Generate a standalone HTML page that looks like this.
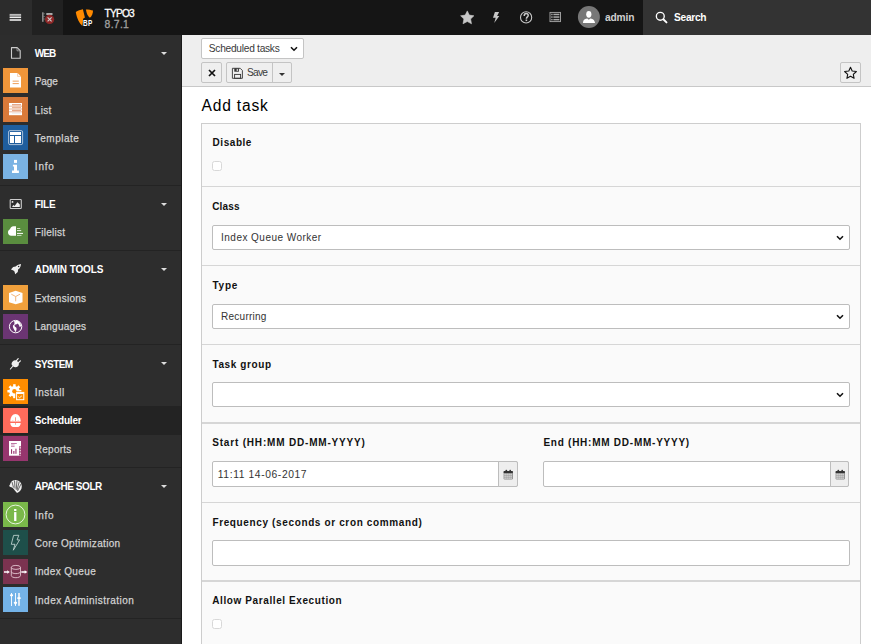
<!DOCTYPE html>
<html><head><meta charset="utf-8"><style>
*{margin:0;padding:0;box-sizing:border-box}
html,body{width:871px;height:644px;overflow:hidden;background:#fff;font-family:"Liberation Sans",sans-serif}
.t{position:absolute;line-height:1;white-space:nowrap}
.a{position:absolute}
svg{position:absolute;overflow:visible}
</style></head>
<body>
<div class="a" style="left:0;top:0;width:871px;height:35px;background:#151515"></div><div class="a" style="left:0;top:0;width:32px;height:35px;background:#2c2c2c"></div><div class="a" style="left:32px;top:0;width:31px;height:35px;background:#212121"></div><div class="a" style="left:643px;top:0;width:228px;height:35px;background:#333"></div><svg style="left:0;top:0" width="63" height="35" viewBox="0 0 63 35"><rect x="9.6" y="13.9" width="11.5" height="1.6" fill="#bbb"/><rect x="9.6" y="15.6" width="11.5" height="0.9" fill="#eee"/><rect x="9.6" y="17" width="11.5" height="1.1" fill="#eee"/><rect x="9.6" y="19.2" width="11.5" height="1.6" fill="#eee"/><rect x="42" y="12.3" width="1.6" height="9.5" fill="#888"/><rect x="43.4" y="13.4" width="1.3" height="0.8" fill="#888"/><rect x="43.4" y="16" width="1.3" height="0.8" fill="#888"/><rect x="43.4" y="18.6" width="1.3" height="0.8" fill="#888"/><rect x="46.3" y="13" width="6.2" height="2" fill="#aaa"/><circle cx="49.6" cy="19.4" r="4.6" fill="#8e2727"/><path d="M47.6 17.4 L51.6 21.4 M51.6 17.4 L47.6 21.4" stroke="#ccc" stroke-width="1.1"/></svg><svg style="left:0;top:0" width="110" height="35" viewBox="0 0 110 35"><path d="M75.8 12.1 C77.8 10.6 80.4 9.8 82.9 9.3 L84.9 17.4 L83.3 18.8 L82.3 25.9 C79.8 23.6 76.8 19 75.8 12.1 Z" fill="#ff8a00"/><path d="M85.9 9.4 C88.6 9.4 91.2 9.8 93 10.5 C93 13.5 91.8 16.3 89.9 17.7 C88 16.4 86.5 13.4 85.9 9.4 Z" fill="#ff8a00"/><rect x="83.2" y="18.8" width="10.3" height="8" fill="#151515"/></svg><div class="t" style="left:83.4px;top:18.67px;font-size:8.9px;color:#fff;font-weight:bold;letter-spacing:0.4px;transform:scaleX(0.72);transform-origin:0 0">BP</div>
<div class="t" style="left:104.6px;top:8.97px;font-size:10.2px;color:#fff;font-weight:normal;letter-spacing:-0.814px;-webkit-text-stroke:0.3px #fff">TYPO3</div>
<div class="t" style="left:104.6px;top:19.60px;font-size:10.4px;color:#a0a0a0;font-weight:normal;letter-spacing:0.29px;-webkit-text-stroke:0.3px #a0a0a0">8.7.1</div>
<svg style="left:0;top:0" width="871" height="35" viewBox="0 0 871 35"><path d="M467.3 10.9 L469.3 15.1 L473.9 15.8 L470.6 19 L471.5 23.8 L467.3 21.5 L463 23.8 L463.9 19 L460.6 15.8 L465.2 15.1 Z" fill="#c8c8c8" stroke="#c8c8c8" stroke-width="0.6" stroke-linejoin="round"/><path d="M494.9 12 L499.1 12 L497.1 15.9 L499.3 15.9 L494.2 22.9 L495.7 17.8 L493 17.8 Z" fill="#c8c8c8"/><circle cx="526.1" cy="17.4" r="5.6" fill="none" stroke="#c8c8c8" stroke-width="1.1"/><path d="M524.2 15.9 C524.2 14.3 525.1 13.6 526.2 13.6 C527.4 13.6 528.2 14.4 528.2 15.5 C528.2 16.9 526.4 17 526.4 18.7" fill="none" stroke="#c8c8c8" stroke-width="1.5"/><rect x="525.6" y="19.5" width="1.6" height="1.6" fill="#c8c8c8"/><rect x="550" y="12.4" width="10.5" height="9.2" fill="none" stroke="#aaa" stroke-width="0.9"/><rect x="551.2" y="13.7" width="1.4" height="1.5" fill="#aaa"/><rect x="553.4" y="13.7" width="6" height="1.5" fill="#aaa"/><rect x="551.2" y="16.3" width="1.4" height="1.5" fill="#aaa"/><rect x="553.4" y="16.3" width="6" height="1.5" fill="#aaa"/><rect x="551.2" y="18.9" width="1.4" height="1.5" fill="#aaa"/><rect x="553.4" y="18.9" width="6" height="1.5" fill="#aaa"/><circle cx="588.9" cy="16.95" r="11" fill="#777"/><ellipse cx="588.8" cy="14.3" rx="2.6" ry="3.4" fill="#fff"/><path d="M582.9 23.1 L583.3 21 C583.8 19.6 585.5 18.9 587.3 18.6 L588.8 19.8 L590.3 18.6 C592.1 18.9 593.9 19.6 594.4 21 L595.1 23.1 Z" fill="#fff"/><circle cx="660.3" cy="16.3" r="3.95" fill="none" stroke="#fff" stroke-width="1.35"/><path d="M663.3 19.3 L666.5 22.4" stroke="#fff" stroke-width="1.9" stroke-linecap="round"/></svg><div class="t" style="left:604.9px;top:12.77px;font-size:10.2px;color:#d0d0d0;font-weight:bold;letter-spacing:-0.11px;">admin</div>
<div class="t" style="left:674.1px;top:12.77px;font-size:10.2px;color:#fff;font-weight:bold;letter-spacing:-0.303px;">Search</div>
<div class="a" style="left:0;top:35px;width:182px;height:609px;background:#2d2d2d"></div><div class="a" style="left:181px;top:35px;width:1px;height:609px;background:#1a1a1a"></div><div class="t" style="left:34.8px;top:49.39px;font-size:10px;color:#fff;font-weight:bold;letter-spacing:-0.925px;">WEB</div>
<div class="a" style="left:161px;top:51.55px;width:0;height:0;border-left:3.5px solid transparent;border-right:3.5px solid transparent;border-top:3.5px solid #ddd"></div><svg style="left:0;top:0" width="182" height="644" viewBox="0 0 182 644"><path d="M11.5 47.6 L17.2 47.6 L20.2 50.6 L20.2 58.3 L11.5 58.3 Z" fill="none" stroke="#ccc" stroke-width="1.1" stroke-linejoin="round"/><path d="M17 48 L17 50.8 L19.8 50.8" fill="none" stroke="#aaa" stroke-width="0.8"/></svg><svg style="left:3px;top:68px" width="25" height="25" viewBox="0 0 25 25"><rect width="25" height="25" fill="#f0963a"/><path d="M7 5 L14.6 5 L18 8.4 L18 19.6 L7 19.6 Z" fill="#fff"/><path d="M14.6 5 L14.6 8.4 L18 8.4" fill="none" stroke="#f3b37a" stroke-width="0.6"/><rect x="9.6" y="12.6" width="6.2" height="1.1" fill="#f0a868"/><rect x="9.6" y="15" width="6.2" height="1.1" fill="#f0a868"/></svg><div class="t" style="left:34.8px;top:77.13px;font-size:10px;color:#d2d2d2;font-weight:normal;letter-spacing:-0.117px;-webkit-text-stroke:0.25px #d2d2d2">Page</div>
<svg style="left:3px;top:97px" width="25" height="25" viewBox="0 0 25 25"><rect width="25" height="25" fill="#d97a3a"/><rect x="6" y="6" width="13" height="12.2" fill="#fff"/><rect x="9" y="7" width="9" height="1.4" fill="#e6a889"/><rect x="9" y="9.9" width="9" height="1.3" fill="#eab496"/><rect x="9" y="12.8" width="9" height="1.3" fill="#e6a889"/><rect x="9" y="15.7" width="9" height="1.1" fill="#eee"/><rect x="6" y="8.8" width="13" height="0.6" fill="#d9875a"/><rect x="6" y="11.7" width="13" height="0.6" fill="#d9875a"/><rect x="6" y="14.6" width="13" height="0.6" fill="#d9875a"/></svg><div class="t" style="left:34.8px;top:105.80px;font-size:10px;color:#d2d2d2;font-weight:normal;letter-spacing:0.283px;-webkit-text-stroke:0.25px #d2d2d2">List</div>
<svg style="left:3px;top:125px" width="25" height="25" viewBox="0 0 25 25"><rect width="25" height="25" fill="#1f5e9e"/><rect x="5.6" y="5.6" width="14" height="14" rx="1.4" fill="none" stroke="#a8c0da" stroke-width="1"/><rect x="7" y="7" width="11" height="3" fill="#fff"/><rect x="7" y="11" width="4" height="7" fill="#fff"/><rect x="12" y="11" width="6" height="7" fill="#fff"/></svg><div class="t" style="left:34.8px;top:134.47px;font-size:10px;color:#d2d2d2;font-weight:normal;letter-spacing:0.5px;-webkit-text-stroke:0.25px #d2d2d2">Template</div>
<svg style="left:3px;top:154px" width="25" height="25" viewBox="0 0 25 25"><rect width="25" height="25" fill="#7ab3e3"/><rect x="11" y="5.9" width="3" height="3" fill="#fff"/><path d="M9.9 10.8 L14 10.8 L14 16.6 L15.9 16.6 L15.9 19 L9 19 L9 16.6 L11 16.6 L11 12.5 L9.9 12.5 Z" fill="#fff"/></svg><div class="t" style="left:34.8px;top:162.15px;font-size:10px;color:#d2d2d2;font-weight:normal;letter-spacing:0.8px;-webkit-text-stroke:0.25px #d2d2d2">Info</div>
<div class="a" style="left:0;top:185px;width:181px;height:1px;background:#232323"></div><div class="t" style="left:34.8px;top:199.76px;font-size:10px;color:#fff;font-weight:bold;letter-spacing:-0.283px;">FILE</div>
<div class="a" style="left:161px;top:202.93px;width:0;height:0;border-left:3.5px solid transparent;border-right:3.5px solid transparent;border-top:3.5px solid #ddd"></div><svg style="left:0;top:0" width="182" height="644" viewBox="0 0 182 644"><rect x="10.2" y="199.5" width="11.1" height="9" rx="0.8" fill="none" stroke="#ccc" stroke-width="1.1"/><circle cx="12.5" cy="201.9" r="0.95" fill="#eee"/><path d="M12 206.9 L13.3 204.9 L14.6 205.9 L17.4 202.2 L19.8 204.5 L19.8 206.9 Z" fill="#eee"/></svg><svg style="left:3px;top:219px" width="25" height="25" viewBox="0 0 25 25"><rect width="25" height="25" fill="#5a8d3f"/><path d="M13 7.2 L10.5 7.2 C8.5 7.2 7.3 8.6 7 10.3 C5.8 10.8 5 11.9 5 13.3 C5 15.3 6.3 16.7 8.2 16.7 L13 16.7 Z" fill="#fff"/><rect x="14" y="9" width="3.2" height="0.9" fill="#d6e5cf"/><rect x="14" y="11.1" width="4.2" height="1" fill="#e8f0e4"/><rect x="14" y="13.9" width="6" height="1" fill="#fff"/><rect x="14" y="15.9" width="4.5" height="0.9" fill="#d6e5cf"/></svg><div class="t" style="left:34.8px;top:227.52px;font-size:10px;color:#d2d2d2;font-weight:normal;letter-spacing:0.264px;-webkit-text-stroke:0.25px #d2d2d2">Filelist</div>
<div class="a" style="left:0;top:250px;width:181px;height:1px;background:#232323"></div><div class="t" style="left:34.8px;top:265.14px;font-size:10px;color:#fff;font-weight:bold;letter-spacing:-0.12px;">ADMIN TOOLS</div>
<div class="a" style="left:161px;top:268.30px;width:0;height:0;border-left:3.5px solid transparent;border-right:3.5px solid transparent;border-top:3.5px solid #ddd"></div><svg style="left:0;top:0" width="182" height="644" viewBox="0 0 182 644"><path d="M21.06 263.97 C19.6 264.1 18.3 264.5 17.2 265.2 L15.6 266.6 L13.1 266.9 L11 269.6 L13.4 270.4 L14.5 271.6 L15.2 274.2 L17.8 272 L18.1 269.6 L19.6 268.2 C20.4 267 20.9 265.6 21.06 263.97 Z" fill="#eee"/><circle cx="18.6" cy="266.4" r="0.75" fill="#2d2d2d"/></svg><svg style="left:3px;top:285px" width="25" height="25" viewBox="0 0 25 25"><rect width="25" height="25" fill="#f0a03c"/><path d="M12.7 5.8 L19.5 8 L19.5 17.3 L12.7 19.2 L6 17.3 L6 8 Z" fill="#fff"/><path d="M8.3 9.2 L12.7 11.5 L17 9.2 M12.7 11.5 L12.7 16.3" fill="none" stroke="#f2ae6a" stroke-width="0.9"/></svg><div class="t" style="left:34.8px;top:293.89px;font-size:10px;color:#d2d2d2;font-weight:normal;letter-spacing:0.256px;-webkit-text-stroke:0.25px #d2d2d2">Extensions</div>
<svg style="left:3px;top:314px" width="25" height="25" viewBox="0 0 25 25"><rect width="25" height="25" fill="#6b3573"/><circle cx="12.6" cy="12.6" r="6.2" fill="none" stroke="#fff" stroke-width="1"/><path d="M10.9 7.2 C12 9 11.6 10.5 10 11.5 C9.5 13 10.6 14.5 11.2 15.8 L12.6 18.2 C13.5 16 14 14.8 13.2 13.5 C12 12.5 11.2 12.7 11.6 10.8 C13 10.8 14 10.2 14.6 9.6 C15.8 10.5 16.5 12 16.6 13 L18.1 12.2 C18 9.6 16.5 7.6 14.5 6.7 Z" fill="#fff"/></svg><div class="t" style="left:34.8px;top:321.56px;font-size:10px;color:#d2d2d2;font-weight:normal;letter-spacing:0.213px;-webkit-text-stroke:0.25px #d2d2d2">Languages</div>
<div class="a" style="left:0;top:344px;width:181px;height:1px;background:#232323"></div><div class="t" style="left:34.8px;top:360.18px;font-size:10px;color:#fff;font-weight:bold;letter-spacing:-0.56px;">SYSTEM</div>
<div class="a" style="left:161px;top:362.34px;width:0;height:0;border-left:3.5px solid transparent;border-right:3.5px solid transparent;border-top:3.5px solid #ddd"></div><svg style="left:0;top:0" width="182" height="644" viewBox="0 0 182 644"><path d="M12.9 361.2 C14 360 16 360.2 17 361 L18.3 362.3 C19 363.3 19.2 365.3 18 366.3 C16.6 367.7 14.3 367.6 13 366.3 L12.3 365.6 C11 364.3 11.5 362.4 12.9 361.2 Z" fill="#eee"/><path d="M16 361.2 L18.2 358.7 M17.9 363.3 L20.4 360.9" stroke="#eee" stroke-width="1.2" stroke-linecap="round"/><path d="M13 366 L10.4 369" stroke="#eee" stroke-width="1.1" stroke-linecap="round"/></svg><svg style="left:3px;top:379px" width="25" height="25" viewBox="0 0 25 25"><rect width="25" height="25" fill="#ff8d00"/><circle cx="11.4" cy="12.2" r="5.2" fill="#fff"/><rect x="10.15" y="5.20" width="2.5" height="3" transform="rotate(0 11.4 12.2)" fill="#fff"/><rect x="10.15" y="5.20" width="2.5" height="3" transform="rotate(45 11.4 12.2)" fill="#fff"/><rect x="10.15" y="5.20" width="2.5" height="3" transform="rotate(90 11.4 12.2)" fill="#fff"/><rect x="10.15" y="5.20" width="2.5" height="3" transform="rotate(135 11.4 12.2)" fill="#fff"/><rect x="10.15" y="5.20" width="2.5" height="3" transform="rotate(180 11.4 12.2)" fill="#fff"/><rect x="10.15" y="5.20" width="2.5" height="3" transform="rotate(225 11.4 12.2)" fill="#fff"/><rect x="10.15" y="5.20" width="2.5" height="3" transform="rotate(270 11.4 12.2)" fill="#fff"/><rect x="10.15" y="5.20" width="2.5" height="3" transform="rotate(315 11.4 12.2)" fill="#fff"/><circle cx="11.4" cy="12.2" r="2.2" fill="#ff8d00"/><rect x="12.3" y="12.3" width="10" height="10" fill="#ff8d00"/><rect x="13.6" y="13.4" width="7.2" height="7.3" fill="none" stroke="#fff" stroke-width="1"/><rect x="13.6" y="13.4" width="7.2" height="1.6" fill="#fff"/><path d="M15.3 17.7 L16.6 18.7 L18.8 16.9" fill="none" stroke="#fff" stroke-width="0.9"/></svg><div class="t" style="left:34.8px;top:387.93px;font-size:10px;color:#d2d2d2;font-weight:normal;letter-spacing:0.567px;-webkit-text-stroke:0.25px #d2d2d2">Install</div>
<div class="a" style="left:0;top:406px;width:181px;height:29px;background:#232323"></div><svg style="left:3px;top:408px" width="25" height="25" viewBox="0 0 25 25"><rect width="25" height="25" fill="#ff6b5b"/><path d="M7.3 13.6 C7.3 8.8 9.6 5.9 12.5 5.9 C15.4 5.9 17.7 8.8 17.7 13.6 Z" fill="#fff"/><rect x="12.15" y="9.3" width="0.75" height="3.8" fill="#ff7a66"/><circle cx="9.9" cy="12.5" r="0.4" fill="#ff8a78"/><circle cx="15.1" cy="12.5" r="0.4" fill="#ff8a78"/><path d="M7.3 15.1 L17.7 15.1 C17.6 17.4 16.6 19.1 14.6 19.1 L10.4 19.1 C8.4 19.1 7.4 17.4 7.3 15.1 Z" fill="#fff"/><rect x="12.15" y="15.1" width="0.75" height="1.6" fill="#ff7a66"/></svg><div class="t" style="left:34.8px;top:415.60px;font-size:10px;color:#fff;font-weight:bold;letter-spacing:-0.181px;">Scheduler</div>
<svg style="left:3px;top:436px" width="25" height="25" viewBox="0 0 25 25"><rect width="25" height="25" fill="#96366e"/><rect x="6" y="5" width="12" height="14.7" fill="#fff"/><rect x="16" y="10.4" width="2.3" height="9" fill="#98356b"/><rect x="16.6" y="11" width="1.1" height="1.7" fill="#fff"/><rect x="16.6" y="13.7" width="1.1" height="1.7" fill="#fff"/><rect x="16.6" y="16.4" width="1.1" height="1.9" fill="#fff"/><rect x="8" y="7" width="5.8" height="0.9" fill="#b8679a"/><rect x="8" y="8.4" width="3.6" height="0.9" fill="#cfa0bd"/><rect x="8" y="9.8" width="3.6" height="0.9" fill="#b8679a"/><rect x="8" y="13.2" width="1.1" height="4.6" fill="#98356b"/><rect x="10" y="15" width="1.6" height="2.8" fill="#b8679a"/><rect x="12.4" y="12.7" width="1.1" height="5.1" fill="#98356b"/></svg><div class="t" style="left:34.8px;top:445.27px;font-size:10px;color:#d2d2d2;font-weight:normal;letter-spacing:0.25px;-webkit-text-stroke:0.25px #d2d2d2">Reports</div>
<div class="a" style="left:0;top:467px;width:181px;height:1px;background:#232323"></div><div class="t" style="left:34.8px;top:481.89px;font-size:10px;color:#fff;font-weight:bold;letter-spacing:-0.455px;">APACHE SOLR</div>
<div class="a" style="left:161px;top:485.05px;width:0;height:0;border-left:3.5px solid transparent;border-right:3.5px solid transparent;border-top:3.5px solid #ddd"></div><svg style="left:0;top:0" width="182" height="644" viewBox="0 0 182 644"><path d="M10.5 483 C11.5 480.5 14 479.7 16 480 C19.5 480.3 21.8 483 21.8 486.5 C21.8 489.5 19.8 492.2 17 492.9 C15.5 491.5 14.2 489.5 12.5 487.8 C11 487 9.5 487 9.2 486 C9.5 485 10.2 484.5 10.5 483 Z" fill="#eee"/><path d="M12 482 L13.5 487.5 M14.5 480.5 L15 488.5 M17 480.3 L16.2 489.5 M19.3 481.5 L17 490 M21 484 L17.5 491" stroke="#2d2d2d" stroke-width="0.7"/></svg><svg style="left:3px;top:502px" width="25" height="25" viewBox="0 0 25 25"><rect width="25" height="25" fill="#7ab84a"/><circle cx="12.5" cy="12.5" r="9.4" fill="none" stroke="#fff" stroke-width="0.9" opacity="0.9"/><rect x="11.1" y="7" width="2.3" height="2" fill="#fff"/><rect x="11.1" y="10.1" width="2.3" height="8.9" fill="#fff"/></svg><div class="t" style="left:34.8px;top:510.64px;font-size:10px;color:#d2d2d2;font-weight:normal;letter-spacing:0.7px;-webkit-text-stroke:0.25px #d2d2d2">Info</div>
<svg style="left:3px;top:530px" width="25" height="25" viewBox="0 0 25 25"><rect width="25" height="25" fill="#1e4f4a"/><path d="M10.6 5.4 L15.8 5.3 L14.1 9.9 L16.6 9.9 L10.3 20.2 L12 14.3 L8.3 14.3 Z" fill="none" stroke="#c4d6d3" stroke-width="0.85" stroke-linejoin="round"/></svg><div class="t" style="left:34.8px;top:539.30px;font-size:10px;color:#d2d2d2;font-weight:normal;letter-spacing:0.334px;-webkit-text-stroke:0.25px #d2d2d2">Core Optimization</div>
<svg style="left:3px;top:559px" width="25" height="25" viewBox="0 0 25 25"><rect width="25" height="25" fill="#7b3350"/><ellipse cx="12.9" cy="8.4" rx="4.6" ry="2" fill="none" stroke="#e3c6d1" stroke-width="0.9"/><path d="M8.3 8.4 L8.3 16.6 C8.3 17.8 10.4 18.7 12.9 18.7 C15.4 18.7 17.5 17.8 17.5 16.6 L17.5 8.4" fill="none" stroke="#e3c6d1" stroke-width="0.9"/><path d="M8.3 12.6 C8.3 13.8 10.4 14.6 12.9 14.6 C15.4 14.6 17.5 13.8 17.5 12.6" fill="none" stroke="#e3c6d1" stroke-width="0.9"/><path d="M1 13 L4.6 13" stroke="#fff" stroke-width="1.5"/><path d="M4.2 11.2 L6.8 13 L4.2 14.8 Z" fill="#fff"/><path d="M18.3 13 L22 13" stroke="#fff" stroke-width="1.5"/><path d="M21.6 11.2 L24.4 13 L21.6 14.8 Z" fill="#fff"/></svg><div class="t" style="left:34.8px;top:566.97px;font-size:10px;color:#d2d2d2;font-weight:normal;letter-spacing:0.365px;-webkit-text-stroke:0.25px #d2d2d2">Index Queue</div>
<svg style="left:3px;top:587px" width="25" height="25" viewBox="0 0 25 25"><rect width="25" height="25" fill="#74b3e8"/><rect x="8.1" y="6" width="0.9" height="13" fill="#fff"/><path d="M7 8.8 L8.55 6 L10.1 8.8 Z" fill="#fff"/><rect x="7" y="7.4" width="3" height="1.8" rx="0.8" fill="#fff"/><rect x="12" y="6" width="0.9" height="13" fill="#fff"/><path d="M10.8 15.6 L12.45 18.6 L14.1 15.6 Z" fill="#fff"/><rect x="10.8" y="14.8" width="3.3" height="1.7" rx="0.8" fill="#fff"/><rect x="15" y="6" width="2" height="12.8" fill="#d8e8f6"/><rect x="14.1" y="10.2" width="3.8" height="1.8" rx="0.9" fill="#fff"/></svg><div class="t" style="left:34.8px;top:595.64px;font-size:10px;color:#d2d2d2;font-weight:normal;letter-spacing:0.476px;-webkit-text-stroke:0.25px #d2d2d2">Index Administration</div>
<div class="a" style="left:0;top:618px;width:181px;height:1px;background:#232323"></div><div class="a" style="left:182px;top:35px;width:689px;height:51px;background:#eeeeee"></div><div class="a" style="left:182px;top:86px;width:689px;height:1px;background:#c8c8c8"></div><div class="a" style="left:201px;top:38px;width:103px;height:21px;background:#fff;border:1px solid #c4c4c4;border-radius:2px;"></div>
<div class="t" style="left:208.8px;top:43.67px;font-size:10.2px;color:#3a3a3a;font-weight:normal;letter-spacing:-0.269px;">Scheduled tasks</div>
<svg style="left:290px;top:46px" width="8" height="6" viewBox="0 0 8 6"><path d="M1 1.2 L4 4.2 L7 1.2" fill="none" stroke="#111" stroke-width="1.6"/></svg><div class="a" style="left:201px;top:62px;width:21px;height:21px;background:#efefef;border:1px solid #c4c4c4;border-radius:2px;"></div>
<svg style="left:207.5px;top:68.8px" width="8" height="8" viewBox="0 0 8 8"><path d="M1 1 L7 7 M7 1 L1 7" fill="none" stroke="#111" stroke-width="1.7"/></svg><div class="a" style="left:226px;top:62px;width:66px;height:21px;background:#efefef;border:1px solid #c4c4c4;border-radius:2px;"></div>
<div class="a" style="left:272px;top:62px;width:1px;height:21px;background:#c4c4c4"></div><div class="a" style="left:840px;top:62px;width:21px;height:21px;background:#efefef;border:1px solid #c4c4c4;border-radius:2px;"></div>
<div class="t" style="left:246.9px;top:67.67px;font-size:10.2px;color:#3a3a3a;font-weight:normal;letter-spacing:-0.719px;">Save</div>
<svg style="left:0;top:0" width="871" height="100" viewBox="0 0 871 100"><path d="M232.4 68.3 L240.2 68.3 L242.4 70.5 L242.4 78.3 L232.4 78.3 Z" fill="none" stroke="#333" stroke-width="0.9"/><rect x="234.3" y="68.3" width="4.6" height="3.4" fill="#333"/><rect x="236.7" y="68.9" width="1.1" height="2.1" fill="#eee"/><rect x="234.6" y="74.4" width="6" height="3.9" fill="none" stroke="#333" stroke-width="0.9"/><path d="M850.5 67.3 L852.2 71 L856.4 71.5 L853.3 74.3 L854.1 78.3 L850.5 76.3 L846.9 78.3 L847.7 74.3 L844.6 71.5 L848.8 71 Z" fill="none" stroke="#111" stroke-width="1.1" stroke-linejoin="round"/></svg><div class="a" style="left:279.2px;top:73px;width:0;height:0;border-left:3px solid transparent;border-right:3px solid transparent;border-top:3px solid #333"></div><div class="t" style="left:201.5px;top:98.19px;font-size:15.6px;color:#000;font-weight:normal;letter-spacing:0.82px;">Add task</div>
<div class="a" style="left:201px;top:123px;width:660px;height:540px;background:#fafafa;border:1px solid #cdcdcd"></div><div class="a" style="left:202px;top:186px;width:658px;height:1px;background:#d6d6d6"></div><div class="a" style="left:202px;top:265px;width:658px;height:1px;background:#d6d6d6"></div><div class="a" style="left:202px;top:344px;width:658px;height:1px;background:#d6d6d6"></div><div class="a" style="left:202px;top:422.3px;width:658px;height:1.8px;background:#d6d6d6"></div><div class="a" style="left:202px;top:502px;width:658px;height:1px;background:#d6d6d6"></div><div class="a" style="left:202px;top:580.2px;width:658px;height:1.8px;background:#d6d6d6"></div><div class="t" style="left:212.6px;top:138.44px;font-size:10px;color:#111;font-weight:bold;letter-spacing:0.542px;">Disable</div>
<div class="t" style="left:212.2px;top:201.53px;font-size:10px;color:#111;font-weight:bold;letter-spacing:0.175px;">Class</div>
<div class="t" style="left:212.5px;top:280.54px;font-size:10px;color:#111;font-weight:bold;letter-spacing:0.733px;">Type</div>
<div class="t" style="left:212.5px;top:360.34px;font-size:10px;color:#111;font-weight:bold;letter-spacing:0.594px;">Task group</div>
<div class="t" style="left:212.2px;top:437.74px;font-size:10px;color:#111;font-weight:bold;letter-spacing:0.817px;">Start (HH:MM DD-MM-YYYY)</div>
<div class="t" style="left:543.4px;top:437.74px;font-size:10px;color:#111;font-weight:bold;letter-spacing:0.752px;">End (HH:MM DD-MM-YYYY)</div>
<div class="t" style="left:212.4px;top:517.74px;font-size:10px;color:#111;font-weight:bold;letter-spacing:0.635px;">Frequency (seconds or cron command)</div>
<div class="t" style="left:212.3px;top:596.13px;font-size:10px;color:#111;font-weight:bold;letter-spacing:0.596px;">Allow Parallel Execution</div>
<div class="a" style="left:212px;top:161px;width:10px;height:10px;background:#fff;border:1px solid #d8d8d8;border-radius:2.5px"></div>
<div class="a" style="left:212px;top:619px;width:10px;height:10px;background:#fff;border:1px solid #d8d8d8;border-radius:2.5px"></div>
<div class="a" style="left:212px;top:225px;width:638px;height:25px;background:#fff;border:1px solid #bdbdbd;border-radius:2px;"></div>
<div class="t" style="left:221.1px;top:233.03px;font-size:10px;color:#333;font-weight:normal;letter-spacing:0.465px;">Index Queue Worker</div>
<svg style="left:835.8px;top:234.80px" width="8" height="6" viewBox="0 0 8 6"><path d="M1 1.2 L4 4.2 L7 1.2" fill="none" stroke="#111" stroke-width="1.6"/></svg>
<div class="a" style="left:212px;top:304px;width:638px;height:25px;background:#fff;border:1px solid #bdbdbd;border-radius:2px;"></div>
<div class="t" style="left:221.1px;top:312.04px;font-size:10px;color:#333;font-weight:normal;letter-spacing:0.244px;">Recurring</div>
<svg style="left:835.8px;top:313.80px" width="8" height="6" viewBox="0 0 8 6"><path d="M1 1.2 L4 4.2 L7 1.2" fill="none" stroke="#111" stroke-width="1.6"/></svg>
<div class="a" style="left:212px;top:382px;width:638px;height:25px;background:#fff;border:1px solid #bdbdbd;border-radius:2px;"></div>
<svg style="left:835.8px;top:391.80px" width="8" height="6" viewBox="0 0 8 6"><path d="M1 1.2 L4 4.2 L7 1.2" fill="none" stroke="#111" stroke-width="1.6"/></svg>
<div class="a" style="left:212px;top:461px;width:306px;height:26px;background:#fff;border:1px solid #bdbdbd;border-radius:2px;"></div>
<div class="a" style="left:498px;top:461px;width:20px;height:26px;background:#eee;border:1px solid #bdbdbd;border-radius:0 2px 2px 0"></div>
<div class="t" style="left:217.8px;top:469.68px;font-size:10.3px;color:#333;font-weight:normal;letter-spacing:0.602px;">11:11 14-06-2017</div>
<svg style="left:0;top:0" width="871" height="644" viewBox="0 0 871 644"><rect x="503.60" y="470.90" width="9.3" height="8.5" rx="1.2" fill="#8a8a8a"/><rect x="503.60" y="470.90" width="9.3" height="2.4" rx="0.8" fill="#333"/><rect x="505.50" y="469.80" width="1.6" height="2.2" rx="0.6" fill="#333"/><rect x="509.40" y="469.80" width="1.6" height="2.2" rx="0.6" fill="#333"/><rect x="504.35" y="473.50" width="1.45" height="1.4" fill="#e6e6e6"/><rect x="504.35" y="475.45" width="1.45" height="1.4" fill="#e6e6e6"/><rect x="504.35" y="477.40" width="1.45" height="1.4" fill="#e6e6e6"/><rect x="506.35" y="473.50" width="1.45" height="1.4" fill="#e6e6e6"/><rect x="506.35" y="475.45" width="1.45" height="1.4" fill="#e6e6e6"/><rect x="506.35" y="477.40" width="1.45" height="1.4" fill="#e6e6e6"/><rect x="508.35" y="473.50" width="1.45" height="1.4" fill="#e6e6e6"/><rect x="508.35" y="475.45" width="1.45" height="1.4" fill="#e6e6e6"/><rect x="508.35" y="477.40" width="1.45" height="1.4" fill="#e6e6e6"/><rect x="510.35" y="473.50" width="1.45" height="1.4" fill="#e6e6e6"/><rect x="510.35" y="475.45" width="1.45" height="1.4" fill="#e6e6e6"/><rect x="510.35" y="477.40" width="1.45" height="1.4" fill="#e6e6e6"/></svg><div class="a" style="left:543px;top:461px;width:306px;height:26px;background:#fff;border:1px solid #bdbdbd;border-radius:2px;"></div>
<div class="a" style="left:830px;top:461px;width:19px;height:26px;background:#eee;border:1px solid #bdbdbd;border-radius:0 2px 2px 0"></div>
<svg style="left:0;top:0" width="871" height="644" viewBox="0 0 871 644"><rect x="835.60" y="470.90" width="9.3" height="8.5" rx="1.2" fill="#8a8a8a"/><rect x="835.60" y="470.90" width="9.3" height="2.4" rx="0.8" fill="#333"/><rect x="837.50" y="469.80" width="1.6" height="2.2" rx="0.6" fill="#333"/><rect x="841.40" y="469.80" width="1.6" height="2.2" rx="0.6" fill="#333"/><rect x="836.35" y="473.50" width="1.45" height="1.4" fill="#e6e6e6"/><rect x="836.35" y="475.45" width="1.45" height="1.4" fill="#e6e6e6"/><rect x="836.35" y="477.40" width="1.45" height="1.4" fill="#e6e6e6"/><rect x="838.35" y="473.50" width="1.45" height="1.4" fill="#e6e6e6"/><rect x="838.35" y="475.45" width="1.45" height="1.4" fill="#e6e6e6"/><rect x="838.35" y="477.40" width="1.45" height="1.4" fill="#e6e6e6"/><rect x="840.35" y="473.50" width="1.45" height="1.4" fill="#e6e6e6"/><rect x="840.35" y="475.45" width="1.45" height="1.4" fill="#e6e6e6"/><rect x="840.35" y="477.40" width="1.45" height="1.4" fill="#e6e6e6"/><rect x="842.35" y="473.50" width="1.45" height="1.4" fill="#e6e6e6"/><rect x="842.35" y="475.45" width="1.45" height="1.4" fill="#e6e6e6"/><rect x="842.35" y="477.40" width="1.45" height="1.4" fill="#e6e6e6"/></svg><div class="a" style="left:212px;top:540px;width:638px;height:26px;background:#fff;border:1px solid #bdbdbd;border-radius:2px;"></div>

</body></html>
